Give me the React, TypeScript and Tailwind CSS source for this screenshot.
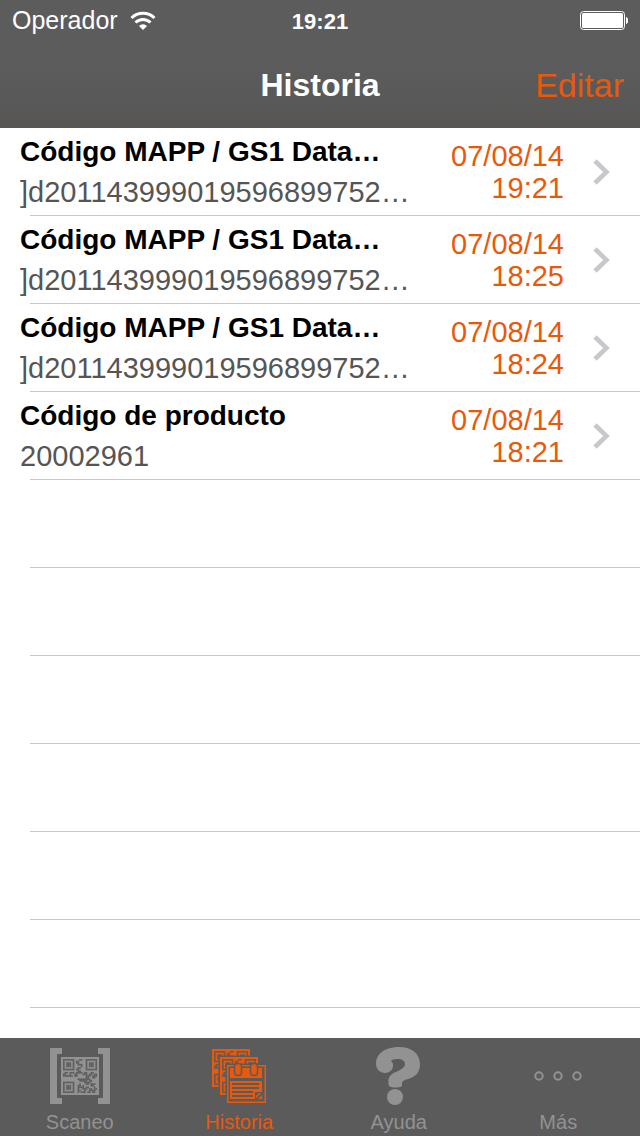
import { useState } from "react";

const entries = [
  { id: 1, title: "Código MAPP / GS1 Data…", code: "]d201143999019596899752…", date: "07/08/14", time: "19:21" },
  { id: 2, title: "Código MAPP / GS1 Data…", code: "]d201143999019596899752…", date: "07/08/14", time: "18:25" },
  { id: 3, title: "Código MAPP / GS1 Data…", code: "]d201143999019596899752…", date: "07/08/14", time: "18:24" },
  { id: 4, title: "Código de producto", code: "20002961", date: "07/08/14", time: "18:21" },
];

const emptyRows = [1, 2, 3, 4, 5, 6];

// 21x21 code, "#" is a dark module
const qrRows = [
  "#######...##..#######",
  "#.....#.##....#.....#",
  "#.###.#.##....#.###.#",
  "#.###.#..###..#.###.#",
  "#.###.#....#..#.###.#",
  "#.....#..##...#.....#",
  "#######.##....#######",
  ".........##..........",
  ".##.###.####.##..##..",
  "##..#..##...###.##.##",
  "######.##.....###.###",
  "..............##..##.",
  ".........########....",
  "..........#####.##...",
  "#######......####....",
  "#.....#...#...##.###.",
  "#.###.#..##.#....##..",
  "#.###.#..####.##...#.",
  "#.###.#..#..###.##.##",
  "#.....#..##..#..####.",
  "#######..#.###.##.##.",
];

const QrCode = () => (
  <g>
    <rect width="38" height="38" fill="currentColor" />
    <g transform="translate(2 2) scale(1.62)" fill="#5b5b5b">
      {qrRows.map((row, y) =>
        row.split("").map((cell, x) =>
          cell === "#" ? <rect key={`${x}-${y}`} x={x} y={y} width="1" height="1" /> : null
        )
      )}
    </g>
  </g>
);

const WifiIcon = () => (
  <svg width="26" height="20" viewBox="0 0 26 20" fill="none" stroke="white" strokeWidth="3" aria-hidden="true">
    <path d="M1.500 7a16.500 16.500 0 0 1 23 0" />
    <path d="M5.500 11.500a10.600 10.600 0 0 1 15 0" />
    <path d="M13 19l-4-4a5.700 5.700 0 0 1 8 0z" fill="white" stroke="none" />
  </svg>
);

const BatteryIcon = () => (
  <svg width="48" height="20" viewBox="0 0 48 20" aria-hidden="true">
    <rect x="0.5" y="0.5" width="44" height="18" rx="3" fill="none" stroke="white" />
    <rect x="2" y="2" width="41" height="15" rx="1.5" fill="white" />
    <path d="M46 6c3 1 3 6 0 7z" fill="white" />
  </svg>
);

const ChevronIcon = () => (
  <svg width="18" height="26" viewBox="0 0 18 26" fill="none" stroke="#c7c7cc" strokeWidth="4.500" aria-hidden="true">
    <path d="M2 2l11.500 11L2 24" />
  </svg>
);

const ScanIcon = () => (
  <svg width="60" height="56" viewBox="0 0 60 56" fill="currentColor" aria-hidden="true">
    <path d="M0 0h12v6H7v44h5v6H0zM60 0H48v6h5v44h-5v6h12z" />
    <g transform="translate(11 9)">
      <QrCode />
    </g>
  </svg>
);

const HistoryIcon = () => (
  <svg width="54" height="54" viewBox="0 0 54 54" fill="currentColor" aria-hidden="true">
    <QrCode />
    <path d="M6.500 6.500h38v38h-38z" fill="#5b5b5b" />
    <g transform="translate(8 8)">
      <QrCode />
    </g>
    {/* Calendar page */}
    <path d="M13.500 14.500H54V54H13.500z" fill="#5b5b5b" />
    <path d="M15.750 16.750h37.500v36.500h-37.500z" fill="none" stroke="currentColor" strokeWidth="1.500" />
    <path d="M18 19h32v10H18zM18 32h32v18H18z" />
    <path d="M20 34h27v2H20zM20 38h27v2H20zM20 42h21v2H20zM20 46h21v2H20zM43 43h7v7h-7z" fill="#5b5b5b" />
    <path d="M44 49v-2l3-3h2zM46 50l4-4v4z" />
    <g stroke="#5b5b5b" strokeWidth="1.500">
      <rect x="22.500" y="14.500" width="7" height="12" rx="3" />
      <rect x="38.500" y="14.500" width="7" height="12" rx="3" />
    </g>
  </svg>
);

const HelpIcon = () => (
  <svg width="48" height="60" viewBox="0 0 48 60" fill="currentColor" aria-hidden="true">
    <path d="M1 18C1 7 11 1 24 1c13 0 21 7 21 17 0 9-5 13-12 15-4 1-6 2-6 4v3c-3 2-10 2-13 0-2-8 1-12 7-14 6-3 9-5 9-8s-3-5-7-5-7 1-7 2c2 1 2 3 2 5 0 4-4 7-8 7-5 0-9-4-9-9z" />
    <circle cx="20" cy="51" r="8" />
  </svg>
);

const MoreIcon = () => (
  <svg width="50" height="12" viewBox="0 0 50 12" fill="none" stroke="currentColor" strokeWidth="2" aria-hidden="true">
    <circle cx="6" cy="6" r="3.700" />
    <circle cx="25" cy="6" r="3.700" />
    <circle cx="44" cy="6" r="3.700" />
  </svg>
);

const tabs = [
  { id: "scan", label: "Scaneo", Icon: ScanIcon },
  { id: "history", label: "Historia", Icon: HistoryIcon },
  { id: "help", label: "Ayuda", Icon: HelpIcon },
  { id: "more", label: "Más", Icon: MoreIcon },
];

export default function App() {
  const [active, setActive] = useState("history");

  return (
    <div className="flex min-h-screen flex-col bg-white font-['Liberation_Sans',Arial,sans-serif]">
      <header className="bg-linear-to-b from-[#5c5c5c] from-50% to-[#575655] text-white">
        {/* Status bar */}
        <div className="grid h-[42px] grid-cols-3 items-center px-3 text-[25px]">
          <div className="flex items-center gap-3">
            <span>Operador</span>
            <WifiIcon />
          </div>
          <span className="text-center text-[22px] font-bold">19:21</span>
          <div className="flex justify-end">
            <BatteryIcon />
          </div>
        </div>
        {/* Navigation bar */}
        <div className="grid h-[86px] grid-cols-3 items-center px-4">
          <h1 className="col-start-2 text-center text-[32px] font-bold">Historia</h1>
          <button type="button" className="justify-self-end text-[34px] text-[#e8590c]">Editar</button>
        </div>
      </header>

      <main className="flex-1">
        <ul>
          {entries.map((entry) => (
            <li key={entry.id}>
              <a href="#detail" className="flex h-22 items-center pl-5">
                <div className="min-w-0 flex-1">
                  <p className="truncate text-[28px] leading-10 font-bold text-black">{entry.title}</p>
                  <p className="truncate text-[29px] leading-10 text-[#555555]">{entry.code}</p>
                </div>
                <p className="w-32 text-right text-[29px] leading-8 text-[#e8590c]">
                  {entry.date}
                  <br />
                  {entry.time}
                </p>
                <span className="flex w-19 justify-center">
                  <ChevronIcon />
                </span>
              </a>
              <div className="-mt-px ml-[30px] h-px bg-[#c8c7cc]" />
            </li>
          ))}
          {emptyRows.map((row) => (
            <li key={row} aria-hidden="true" className="ml-[30px] h-22 border-b border-[#c8c7cc]" />
          ))}
        </ul>
      </main>

      <nav className="grid h-[98px] grid-cols-4 bg-[#5b5b5b] pr-0.5">
        {tabs.map(({ id, label, Icon }) => (
          <button
            key={id}
            type="button"
            onClick={() => setActive(id)}
            className={`flex flex-col items-center ${active === id ? "text-[#e8590c]" : "text-[#929292]"}`}
          >
            <span className="flex h-18 items-center pt-1">
              <Icon />
            </span>
            <span className="text-xl leading-6">{label}</span>
          </button>
        ))}
      </nav>
    </div>
  );
}
